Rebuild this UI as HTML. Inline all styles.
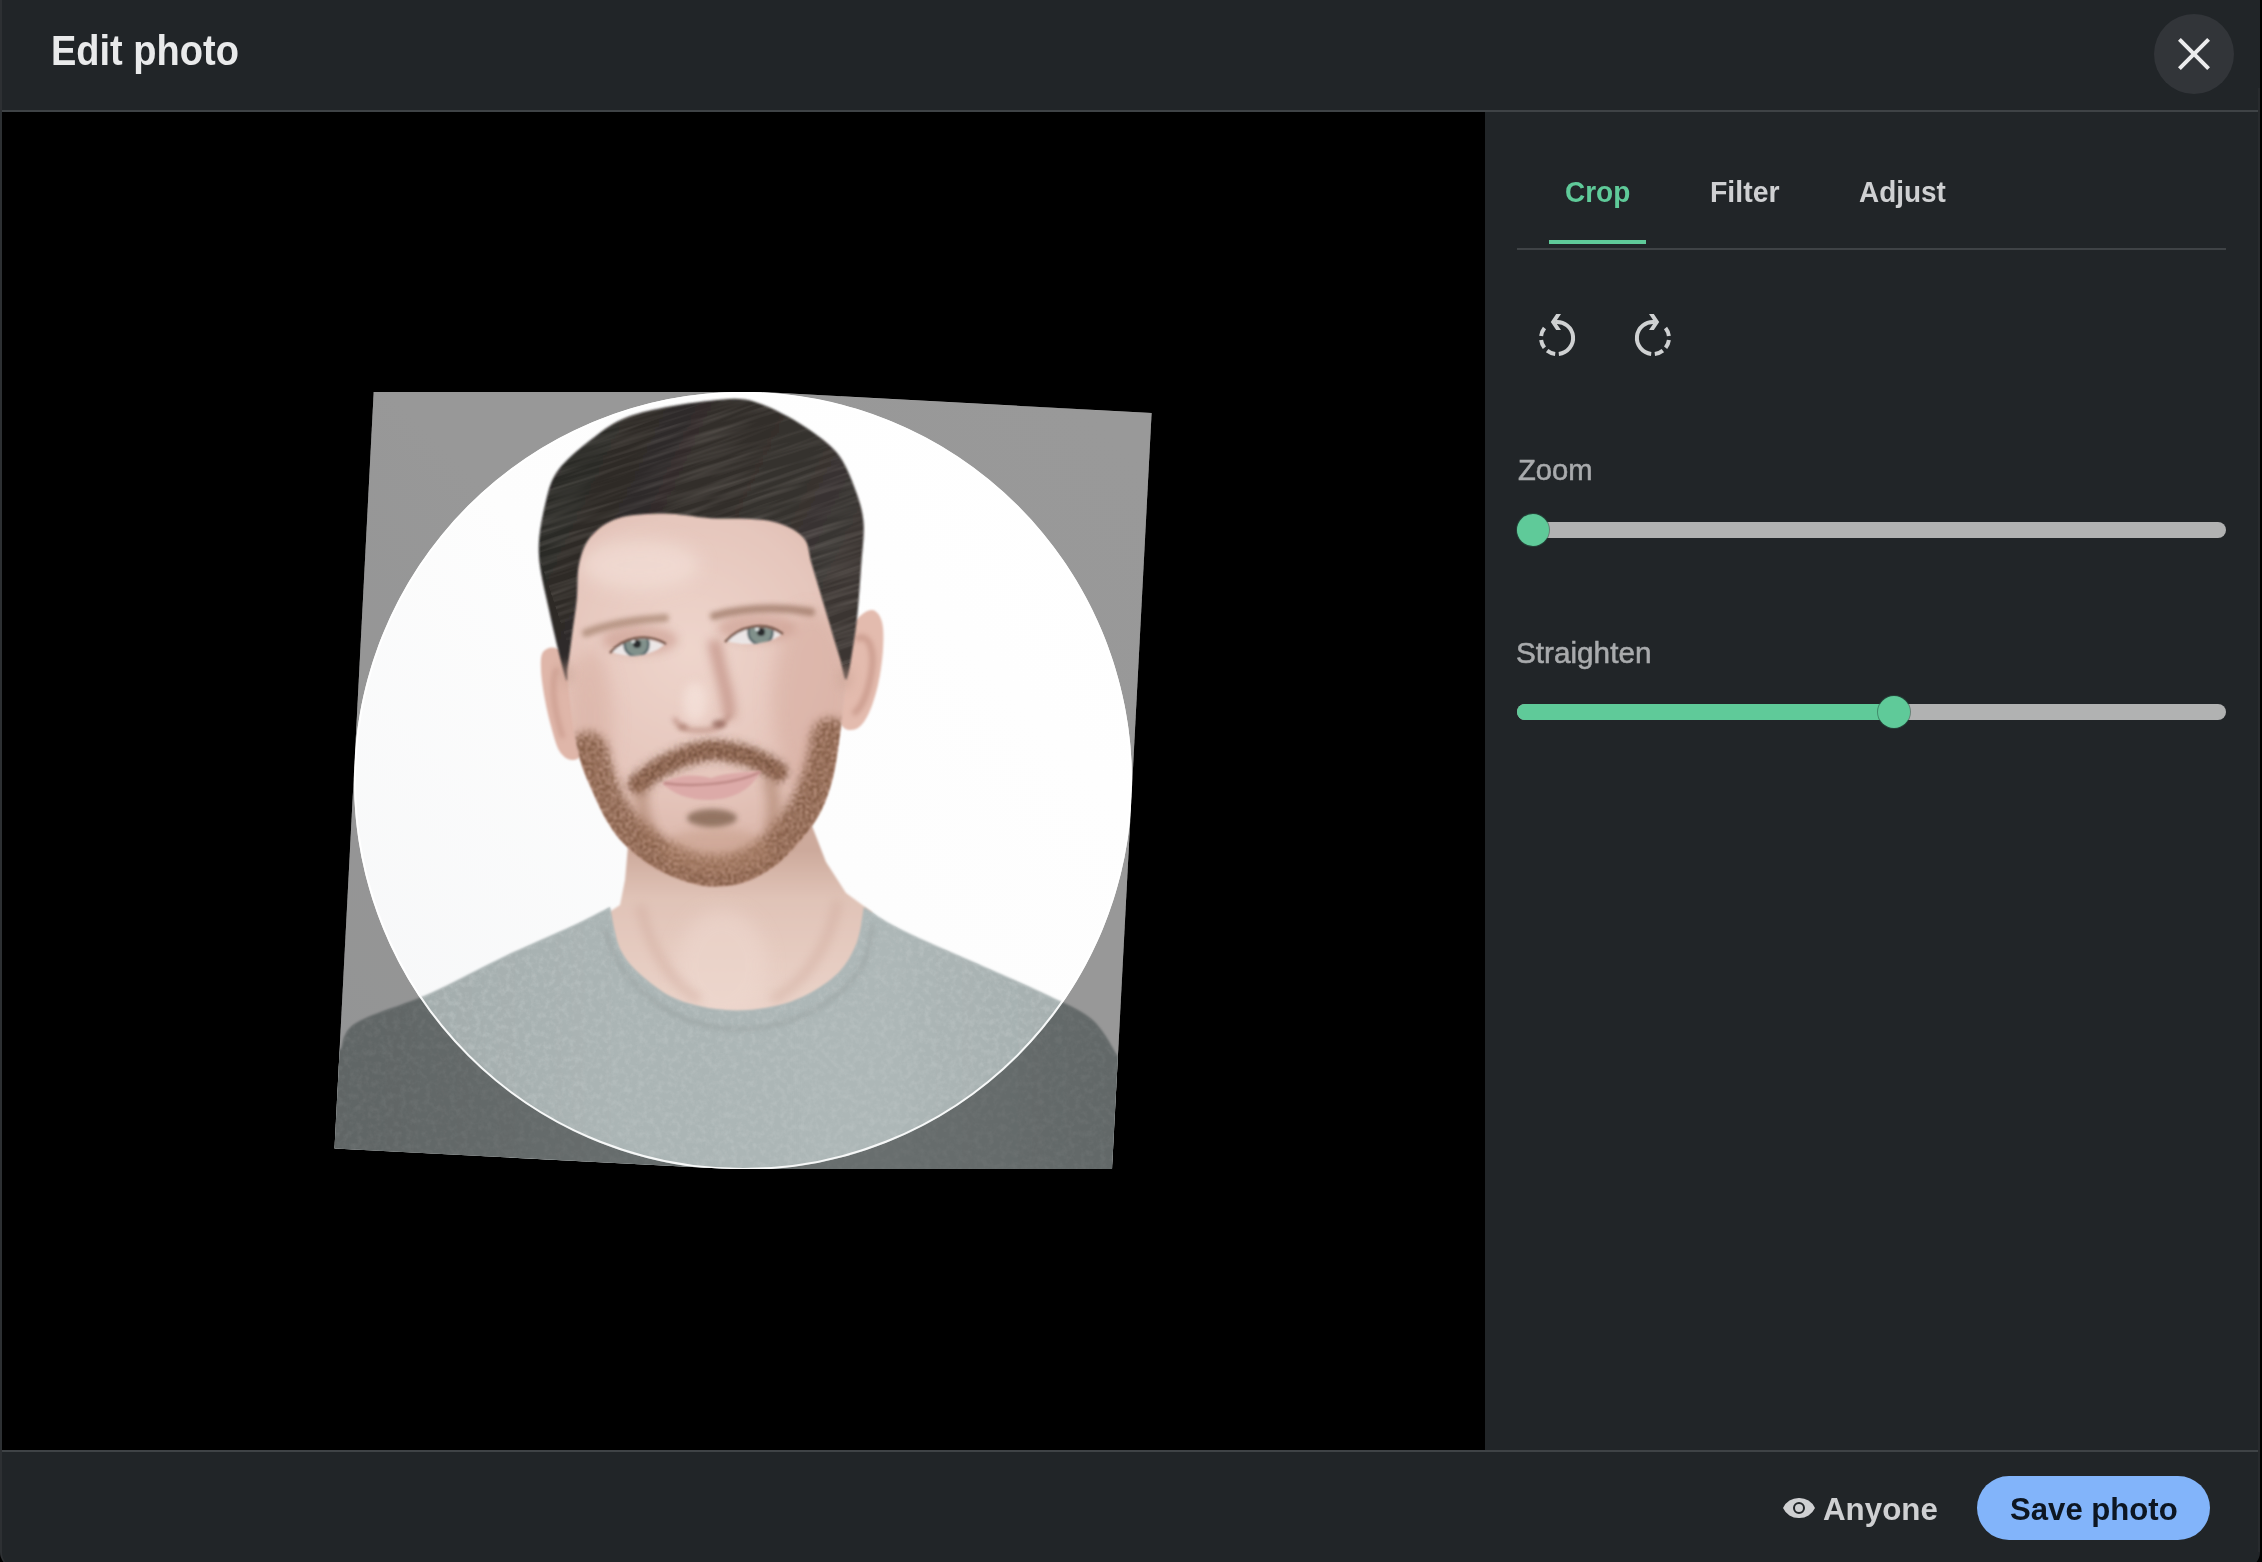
<!DOCTYPE html>
<html>
<head>
<meta charset="utf-8">
<title>Edit photo</title>
<style>
html,body{margin:0;padding:0;width:2262px;height:1562px;overflow:hidden;background:#000;}
#root{position:relative;width:2262px;height:1562px;overflow:hidden;background:#000;font-family:"Liberation Sans",sans-serif;}
.abs{position:absolute;}
.bg{background:#212528;}
.t{position:absolute;white-space:nowrap;line-height:1;transform-origin:0 0;}
#dlg{left:0;top:0;width:2260px;height:1568px;border-radius:0 0 16px 16px;box-sizing:border-box;border-left:2px solid #2d3033;}
#hline{left:2px;top:110px;width:2256px;height:2px;background:#3f4346;}
#canvas{left:2px;top:112px;width:1483px;height:1338px;background:#000;}
#fline{left:2px;top:1450px;width:2256px;height:2px;background:#3f4346;}
#edgeR{left:2258px;top:88px;width:2px;height:1464px;background:#282b2e;}
#close{left:2154px;top:14px;width:80px;height:80px;border-radius:50%;background:#323539;}
#tabline{left:1517px;top:248px;width:709px;height:2px;background:#3f4346;}
#tabul{left:1549px;top:240px;width:97px;height:4px;background:#5fca99;}
.track{height:16px;border-radius:8px;background:#b1b2b2;}
.fill{height:16px;border-radius:8px;background:#5fca99;}
.thumb{width:32px;height:32px;border-radius:50%;background:#5fca99;box-shadow:0 0 0 1px rgba(40,90,70,.55);}
#save{left:1977px;top:1476px;width:233px;height:64px;border-radius:32px;background:#82b4fa;}
</style>
</head>
<body>
<div id="root">
<div class="abs bg" id="dlg"></div>
<div class="abs" id="canvas"></div>
<div class="abs" id="edgeR"></div>
<div class="abs" id="hline"></div>
<div class="abs" id="fline"></div>

<!-- header -->
<div class="t" id="title" style="left:50.5px;top:30px;font-size:42.4px;font-weight:700;color:#e9eaeb;transform:scaleX(.8965)">Edit photo</div>
<div class="abs" id="close"></div>
<svg class="abs" style="left:2170px;top:30px" width="48" height="48" viewBox="0 0 24 24"><path fill="#ececed" d="M13.42 12L20 18.58 18.58 20 12 13.42 5.42 20 4 18.58 10.58 12 4 5.42 5.42 4 12 10.58 18.58 4 20 5.42z"/></svg>

<!-- tabs -->
<div class="t" id="tab1" style="left:1564.5px;top:176px;font-size:30.4px;font-weight:700;color:#5fca99;transform:scaleX(0.9206)">Crop</div>
<div class="t" id="tab2" style="left:1709.5px;top:176px;font-size:30.4px;font-weight:700;color:#cfd0d2;transform:scaleX(0.9359)">Filter</div>
<div class="t" id="tab3" style="left:1859px;top:176px;font-size:30.4px;font-weight:700;color:#cfd0d2;transform:scaleX(0.9175)">Adjust</div>
<div class="abs" id="tabul"></div>
<div class="abs" id="tabline"></div>

<!-- rotate icons -->
<svg class="abs" id="rotL" style="left:1533px;top:314px" width="48" height="48" viewBox="0 0 24 24" fill="none" stroke="#cfd1d2" stroke-width="2">
  <path d="M11.2 4.04A8 8 0 1 1 12.9 19.95"/>
  <path d="M11.1 19.95A8 8 0 0 1 7.07 18.3M5.7 16.9A8 8 0 0 1 4.06 12.98M4.06 11.02A8 8 0 0 1 5.74 7.02"/>
  <path stroke="none" fill="#cfd1d2" d="M14 0H11.6L8.9 4l2.7 4H14l-2.7-4z"/>
</svg>
<svg class="abs" id="rotR" style="left:1629px;top:314px" width="48" height="48" viewBox="0 0 24 24" fill="none" stroke="#cfd1d2" stroke-width="2">
  <g transform="translate(24 0) scale(-1 1)">
  <path d="M11.2 4.04A8 8 0 1 1 12.9 19.95"/>
  <path d="M11.1 19.95A8 8 0 0 1 7.07 18.3M5.7 16.9A8 8 0 0 1 4.06 12.98M4.06 11.02A8 8 0 0 1 5.74 7.02"/>
  <path stroke="none" fill="#cfd1d2" d="M14 0H11.6L8.9 4l2.7 4H14l-2.7-4z"/>
  </g>
</svg>

<!-- sliders -->
<div class="t" id="lzoom" style="left:1517.5px;top:455px;font-size:29.3px;color:#a9abad;-webkit-text-stroke:.55px #a9abad;transform:scaleX(.995)">Zoom</div>
<div class="abs track" style="left:1517px;top:522px;width:709px;"></div>
<div class="abs thumb" style="left:1517px;top:514px;"></div>

<div class="t" id="lstr" style="left:1516px;top:637.5px;font-size:29.3px;color:#a9abad;-webkit-text-stroke:.55px #a9abad;transform:scaleX(1.014)">Straighten</div>
<div class="abs track" style="left:1517px;top:704px;width:709px;"></div>
<div class="abs fill" style="left:1517px;top:704px;width:385px;"></div>
<div class="abs thumb" style="left:1878px;top:696px;"></div>

<!-- footer -->
<svg class="abs" id="eye" style="left:1783px;top:1492px" width="32" height="32" viewBox="0 0 16 16"><path fill="#cfd0d2" d="M8 3a8.59 8.59 0 00-8 5 8.54 8.54 0 008 5 8.55 8.55 0 008-5 8.55 8.55 0 00-8-5zm0 8a3 3 0 113-3 3 3 0 01-3 3zm2-3a2 2 0 11-2-2 2 2 0 012 2z"/></svg>
<div class="t" id="anyone" style="left:1822.5px;top:1492.8px;font-size:32px;font-weight:700;color:#cfd0d2;transform:scaleX(.979)">Anyone</div>
<div class="abs" id="save"></div>
<div class="t" id="savet" style="left:2009.5px;top:1492.8px;font-size:32px;font-weight:700;color:#0d1622;transform:scaleX(.9726)">Save photo</div>

<!-- PHOTO -->
<svg class="abs" id="photo" style="left:0;top:0" width="2262" height="1562" viewBox="0 0 2262 1562">
<defs>
<clipPath id="pc"><polygon points="373.7,392 761,392 1151.6,413 1112,1169 731,1169 334.5,1148.5"/></clipPath>
<clipPath id="ceL"><path d="M612,652 C622,640 645,634 664,645 C652,656 628,659 612,652Z"/></clipPath>
<clipPath id="ceR"><path d="M727,641 C740,627 764,622 781,635 C768,644 744,647 727,641Z"/></clipPath>
<clipPath id="cface"><path d="M566.0,640.0C565.7,663.3 567.8,680.8 570.0,700.0C572.2,719.2 575.2,739.7 579.0,755.0C582.8,770.3 588.0,780.5 593.0,792.0C598.0,803.5 603.2,814.8 609.0,824.0C614.8,833.2 619.8,839.7 627.5,847.0C635.2,854.3 645.0,862.2 655.0,868.0C665.0,873.8 677.4,878.9 687.4,882.0C697.4,885.1 705.4,886.5 715.0,886.5C724.6,886.5 735.0,885.5 745.0,882.0C755.0,878.5 765.4,873.1 775.0,865.8C784.6,858.5 794.9,847.2 802.6,838.0C810.3,828.8 816.0,820.5 821.0,810.5C826.0,800.5 829.4,790.3 832.5,778.0C835.6,765.7 837.3,751.5 839.4,736.8C841.5,722.1 843.6,706.1 845.0,690.0C846.4,673.9 848.0,661.7 848.0,640.0C848.0,618.3 853.0,581.7 845.0,560.0C837.0,538.3 824.2,520.8 800.0,510.0C775.8,499.2 733.3,495.0 700.0,495.0C666.7,495.0 621.3,499.2 600.0,510.0C578.7,520.8 577.7,538.3 572.0,560.0C566.3,581.7 566.3,616.7 566.0,640.0Z"/></clipPath>
<clipPath id="chair"><path d="M565.3,677.0C562.2,667.3 553.4,630.7 549.0,610.0C544.6,589.3 539.3,570.8 538.8,552.8C538.2,534.8 542.5,515.8 545.7,502.0C549.0,488.2 550.8,480.3 558.3,470.0C565.8,459.7 579.8,448.5 590.6,440.0C601.4,431.5 610.6,424.4 622.9,419.0C635.2,413.6 649.7,410.7 664.3,407.6C678.9,404.6 696.9,402.0 710.4,400.7C723.9,399.4 733.5,397.7 745.0,399.6C756.5,401.5 768.0,406.7 779.5,412.3C791.0,417.9 804.0,425.7 814.0,433.0C824.0,440.3 832.5,446.4 839.4,456.0C846.3,465.6 851.6,479.4 855.6,490.6C859.6,501.8 862.7,510.8 863.6,523.0C864.5,535.2 862.3,549.5 861.3,564.0C860.3,578.5 859.1,596.5 857.8,610.0C856.5,623.5 855.2,633.4 853.3,645.0C851.4,656.6 848.7,677.6 846.4,679.5C844.1,681.4 842.9,668.0 839.4,656.5C835.9,645.0 830.2,625.8 825.6,610.4C821.0,595.0 815.6,576.6 811.8,564.3C808.0,552.0 809.9,544.0 802.6,536.7C795.3,529.4 783.4,523.7 768.0,520.6C752.6,517.5 727.7,519.4 710.4,518.2C693.1,517.0 679.7,513.6 664.3,513.6C648.9,513.6 630.5,514.4 618.2,518.2C605.9,522.1 597.1,529.0 590.6,536.7C584.1,544.4 581.3,553.9 579.0,564.3C576.7,574.7 577.9,587.4 576.8,598.9C575.7,610.4 573.7,622.0 572.2,633.5C570.7,645.0 568.8,660.8 567.6,668.0C566.5,675.2 568.4,686.7 565.3,677.0Z"/></clipPath>
<clipPath id="cshirt"><path d="M300,1200 L300,1075 L341,1049 C343.5,1044.7 341.4,1032.2 356.0,1023.0C370.6,1013.8 404.6,1004.9 428.8,994.0C453.0,983.1 477.1,969.4 501.3,957.9C525.5,946.4 555.7,933.8 573.8,925.3C591.9,916.8 604.0,910.0 610.0,907.0C611.8,914.3 614.9,938.5 620.9,950.6C626.9,962.7 636.0,971.1 646.3,979.6C656.6,988.1 667.4,996.3 682.5,1001.4C697.6,1006.5 718.8,1010.4 736.9,1010.4C755.0,1010.4 775.0,1007.1 791.3,1001.4C807.6,995.7 823.9,985.7 834.8,976.0C845.7,966.3 851.7,954.9 856.5,943.4C861.3,931.9 862.6,913.1 863.8,907.0C869.8,910.6 881.9,919.8 900.0,928.9C918.1,938.0 948.3,950.6 972.5,961.5C996.7,972.4 1025.1,984.3 1045.0,994.0C1064.9,1003.7 1079.9,1009.2 1092.0,1019.5C1104.1,1029.8 1113.2,1049.8 1117.5,1055.8L1180,1120 L1180,1200 Z"/></clipPath>
<linearGradient id="bgG" gradientUnits="userSpaceOnUse" x1="1100" y1="420" x2="380" y2="1100">
<stop offset="0" stop-color="#ffffff"/><stop offset=".5" stop-color="#fdfdfd"/><stop offset="1" stop-color="#f6f7f8"/></linearGradient>
<radialGradient id="faceG" gradientUnits="userSpaceOnUse" cx="690" cy="650" r="250">
<stop offset="0" stop-color="#eed5cc"/><stop offset=".55" stop-color="#e5c6bc"/><stop offset="1" stop-color="#d6aea1"/></radialGradient>
<linearGradient id="neckG" gradientUnits="userSpaceOnUse" x1="0" y1="850" x2="0" y2="1010">
<stop offset="0" stop-color="#cdaa9c"/><stop offset=".3" stop-color="#e0c3b7"/><stop offset="1" stop-color="#ead3c9"/></linearGradient>
<linearGradient id="shirtG" gradientUnits="userSpaceOnUse" x1="340" y1="0" x2="1120" y2="0">
<stop offset="0" stop-color="#a0a9a9"/><stop offset=".35" stop-color="#abb5b5"/><stop offset=".7" stop-color="#adb7b7"/><stop offset="1" stop-color="#a3adad"/></linearGradient>
<linearGradient id="hairG" gradientUnits="userSpaceOnUse" x1="560" y1="420" x2="860" y2="560">
<stop offset="0" stop-color="#2a2826"/><stop offset=".5" stop-color="#322e2b"/><stop offset="1" stop-color="#3b3633"/></linearGradient>
<filter id="b1" filterUnits="userSpaceOnUse" x="300" y="370" width="900" height="840"><feGaussianBlur stdDeviation="1.2"/></filter>
<filter id="b2" filterUnits="userSpaceOnUse" x="300" y="370" width="900" height="840"><feGaussianBlur stdDeviation="2.5"/></filter>
<filter id="b4" filterUnits="userSpaceOnUse" x="300" y="370" width="900" height="840"><feGaussianBlur stdDeviation="5"/></filter>
<filter id="b8" filterUnits="userSpaceOnUse" x="300" y="370" width="900" height="840"><feGaussianBlur stdDeviation="9"/></filter>
<filter id="stub" filterUnits="userSpaceOnUse" x="560" y="700" width="320" height="220">
<feTurbulence type="fractalNoise" baseFrequency=".35" numOctaves="2" seed="7" result="n"/>
<feColorMatrix in="n" type="matrix" values="0 0 0 0 0  0 0 0 0 0  0 0 0 0 0  0 0 0 2.2 -.55" result="a"/>
<feGaussianBlur in="SourceGraphic" stdDeviation="4" result="g"/>
<feComposite in="g" in2="a" operator="in"/>
</filter>
<filter id="knit" filterUnits="userSpaceOnUse" x="300" y="880" width="900" height="320">
<feTurbulence type="fractalNoise" baseFrequency=".16" numOctaves="3" seed="3" result="n"/>
<feColorMatrix in="n" type="matrix" values="0 0 0 0 .50  0 0 0 0 .55  0 0 0 0 .55  0 0 0 2.4 -.95"/>
</filter>
<filter id="strand" filterUnits="userSpaceOnUse" x="520" y="380" width="360" height="320">
<feTurbulence type="fractalNoise" baseFrequency=".012 .22" numOctaves="2" seed="5" result="n"/>
<feColorMatrix in="n" type="matrix" values="0 0 0 0 .42  0 0 0 0 .38  0 0 0 0 .35  0 0 0 1.6 -.62"/>
</filter>
</defs>
<g clip-path="url(#pc)">
<rect x="320" y="380" width="850" height="800" fill="url(#bgG)"/>
<!-- neck -->
<path d="M629,835 L625,880 L620,905 L600,918 L615,1020 L870,1020 L872,912 L846,893 L826,862 L812,826 Z" fill="url(#neckG)" filter="url(#b1)"/>
<ellipse cx="722" cy="965" rx="45" ry="55" fill="#efd9d0" opacity=".55" filter="url(#b8)"/>
<path d="M640,905 C650,950 672,985 700,1000 M838,900 C830,945 806,982 772,1000" fill="none" stroke="#cfa99b" stroke-width="10" opacity=".45" filter="url(#b4)"/>
<!-- shirt -->
<path d="M300,1200 L300,1075 L341,1049 C343.5,1044.7 341.4,1032.2 356.0,1023.0C370.6,1013.8 404.6,1004.9 428.8,994.0C453.0,983.1 477.1,969.4 501.3,957.9C525.5,946.4 555.7,933.8 573.8,925.3C591.9,916.8 604.0,910.0 610.0,907.0C611.8,914.3 614.9,938.5 620.9,950.6C626.9,962.7 636.0,971.1 646.3,979.6C656.6,988.1 667.4,996.3 682.5,1001.4C697.6,1006.5 718.8,1010.4 736.9,1010.4C755.0,1010.4 775.0,1007.1 791.3,1001.4C807.6,995.7 823.9,985.7 834.8,976.0C845.7,966.3 851.7,954.9 856.5,943.4C861.3,931.9 862.6,913.1 863.8,907.0C869.8,910.6 881.9,919.8 900.0,928.9C918.1,938.0 948.3,950.6 972.5,961.5C996.7,972.4 1025.1,984.3 1045.0,994.0C1064.9,1003.7 1079.9,1009.2 1092.0,1019.5C1104.1,1029.8 1113.2,1049.8 1117.5,1055.8L1180,1120 L1180,1200 Z" fill="url(#shirtG)" filter="url(#b1)"/>
<g clip-path="url(#cshirt)"><rect x="300" y="880" width="900" height="320" filter="url(#knit)" opacity=".55"/>
<path d="M604.0,930.0C607.0,936.3 614.3,956.7 622.0,968.0C629.7,979.3 639.0,989.3 650.0,998.0C661.0,1006.7 673.5,1014.8 688.0,1020.0C702.5,1025.2 719.7,1029.0 737.0,1029.0C754.3,1029.0 775.2,1025.8 792.0,1020.0C808.8,1014.2 826.0,1003.7 838.0,994.0C850.0,984.3 858.2,973.5 864.0,962.0C869.8,950.5 871.5,931.2 873.0,925.0" fill="none" stroke="#8f9695" stroke-width="3" opacity=".55" filter="url(#b2)"/>
</g>
<!-- ears -->
<path d="M570.0,662.0C567.3,655.0 560.5,649.7 556.0,648.0C551.5,646.3 545.5,648.3 543.0,652.0C540.5,655.7 540.7,662.0 541.0,670.0C541.3,678.0 543.2,690.0 545.0,700.0C546.8,710.0 549.5,721.3 552.0,730.0C554.5,738.7 556.7,747.0 560.0,752.0C563.3,757.0 568.3,760.0 572.0,760.0C575.7,760.0 581.3,758.7 582.0,752.0C582.7,745.3 577.7,730.3 576.0,720.0C574.3,709.7 573.0,699.7 572.0,690.0C571.0,680.3 572.7,669.0 570.0,662.0Z" fill="#dfb6a9" filter="url(#b1)"/>
<path d="M838.0,648.0C841.3,638.8 850.3,626.3 856.0,620.0C861.7,613.7 867.7,609.7 872.0,610.0C876.3,610.3 880.2,615.3 882.0,622.0C883.8,628.7 883.7,639.5 883.0,650.0C882.3,660.5 880.5,674.2 878.0,685.0C875.5,695.8 871.7,707.7 868.0,715.0C864.3,722.3 860.3,727.2 856.0,729.0C851.7,730.8 845.7,730.8 842.0,726.0C838.3,721.2 835.0,708.5 834.0,700.0C833.0,691.5 835.3,683.7 836.0,675.0C836.7,666.3 834.7,657.2 838.0,648.0Z" fill="#e3bbae" filter="url(#b1)"/>
<path d="M856,640 C868,630 876,650 871,675 C867,697 860,710 853,714" fill="none" stroke="#bd8a7c" stroke-width="6" opacity=".6" filter="url(#b2)"/>
<path d="M557,668 C550,682 554,712 563,738" fill="none" stroke="#bd8a7c" stroke-width="5" opacity=".5" filter="url(#b2)"/>
<!-- face -->
<path d="M566.0,640.0C565.7,663.3 567.8,680.8 570.0,700.0C572.2,719.2 575.2,739.7 579.0,755.0C582.8,770.3 588.0,780.5 593.0,792.0C598.0,803.5 603.2,814.8 609.0,824.0C614.8,833.2 619.8,839.7 627.5,847.0C635.2,854.3 645.0,862.2 655.0,868.0C665.0,873.8 677.4,878.9 687.4,882.0C697.4,885.1 705.4,886.5 715.0,886.5C724.6,886.5 735.0,885.5 745.0,882.0C755.0,878.5 765.4,873.1 775.0,865.8C784.6,858.5 794.9,847.2 802.6,838.0C810.3,828.8 816.0,820.5 821.0,810.5C826.0,800.5 829.4,790.3 832.5,778.0C835.6,765.7 837.3,751.5 839.4,736.8C841.5,722.1 843.6,706.1 845.0,690.0C846.4,673.9 848.0,661.7 848.0,640.0C848.0,618.3 853.0,581.7 845.0,560.0C837.0,538.3 824.2,520.8 800.0,510.0C775.8,499.2 733.3,495.0 700.0,495.0C666.7,495.0 621.3,499.2 600.0,510.0C578.7,520.8 577.7,538.3 572.0,560.0C566.3,581.7 566.3,616.7 566.0,640.0Z" fill="url(#faceG)" filter="url(#b1)"/>
<g filter="url(#b1)"><g clip-path="url(#cface)">
<ellipse cx="812" cy="700" rx="40" ry="90" fill="#d5aa9d" opacity=".55" filter="url(#b8)"/>
<ellipse cx="590" cy="720" rx="22" ry="70" fill="#d5aa9d" opacity=".5" filter="url(#b8)"/>
<ellipse cx="640" cy="565" rx="60" ry="26" fill="#f4e2da" opacity=".6" filter="url(#b8)"/>
<!-- eye sockets -->
<ellipse cx="640" cy="640" rx="38" ry="14" fill="#c99a8d" opacity=".6" filter="url(#b4)"/>
<ellipse cx="757" cy="628" rx="40" ry="14" fill="#c99a8d" opacity=".6" filter="url(#b4)"/>
<!-- beard -->
<path d="M588.0,752.0C590.0,758.7 595.2,780.3 600.0,792.0C604.8,803.7 611.0,813.7 617.0,822.0C623.0,830.3 628.5,835.7 636.0,842.0C643.5,848.3 653.0,855.0 662.0,860.0C671.0,865.0 681.0,869.5 690.0,872.0C699.0,874.5 707.2,875.2 716.0,875.0C724.8,874.8 734.0,874.2 743.0,871.0C752.0,867.8 761.3,862.8 770.0,856.0C778.7,849.2 788.0,839.0 795.0,830.0C802.0,821.0 807.2,811.7 812.0,802.0C816.8,792.3 820.8,782.7 824.0,772.0C827.2,761.3 829.8,743.7 831.0,738.0" fill="none" stroke="#9c7158" stroke-width="36" stroke-linecap="round" opacity=".55" filter="url(#b4)"/>
<path d="M588.0,752.0C590.0,758.7 595.2,780.3 600.0,792.0C604.8,803.7 611.0,813.7 617.0,822.0C623.0,830.3 628.5,835.7 636.0,842.0C643.5,848.3 653.0,855.0 662.0,860.0C671.0,865.0 681.0,869.5 690.0,872.0C699.0,874.5 707.2,875.2 716.0,875.0C724.8,874.8 734.0,874.2 743.0,871.0C752.0,867.8 761.3,862.8 770.0,856.0C778.7,849.2 788.0,839.0 795.0,830.0C802.0,821.0 807.2,811.7 812.0,802.0C816.8,792.3 820.8,782.7 824.0,772.0C827.2,761.3 829.8,743.7 831.0,738.0" fill="none" stroke="#7d563f" stroke-width="40" stroke-linecap="round" filter="url(#stub)"/>
<ellipse cx="716" cy="850" rx="55" ry="22" fill="#b98e74" opacity=".35" filter="url(#b4)"/>
<path d="M638,784 C660,764 690,752 712,750 C738,751 760,759 778,772" fill="none" stroke="#94684f" stroke-width="17" stroke-linecap="round" opacity=".7" filter="url(#b2)"/>
<path d="M638,784 C660,764 690,752 712,750 C738,751 760,759 778,772" fill="none" stroke="#6f4c39" stroke-width="21" stroke-linecap="round" filter="url(#stub)"/>
<path d="M642,786 C640,805 645,825 655,842 M768,778 C775,795 776,812 770,832" fill="none" stroke="#9c7158" stroke-width="14" opacity=".45" filter="url(#b4)"/>
<ellipse cx="712" cy="818" rx="25" ry="9" fill="#7a5d49" opacity=".75" filter="url(#b2)"/>
</g></g>
<!-- lips -->
<path d="M662,783 C685,772 700,776 711,778 C728,772 748,772 761,771 C750,792 730,800 708,800 C690,800 672,794 662,783Z" fill="#dcaaa8" filter="url(#b1)"/>
<path d="M664,783 C690,787 735,785 760,772" fill="none" stroke="#b8827f" stroke-width="2.5" opacity=".8" filter="url(#b1)"/>
<!-- nose -->
<path d="M714,640 C720,675 731,700 729,718" fill="none" stroke="#c08e82" stroke-width="13" opacity=".7" filter="url(#b4)"/>
<path d="M674,718 C680,730 692,731 700,730 C710,731 722,728 730,714" fill="none" stroke="#b98b7f" stroke-width="5" opacity=".7" filter="url(#b2)"/>
<ellipse cx="719" cy="724" rx="7" ry="4" fill="#8d5f55" opacity=".75" filter="url(#b2)"/>
<ellipse cx="683" cy="727" rx="5" ry="3" fill="#a5776b" opacity=".7" filter="url(#b2)"/>
<ellipse cx="695" cy="702" rx="12" ry="20" fill="#f5e3dc" opacity=".7" filter="url(#b4)"/>
<!-- eyes -->
<g filter="url(#b1)">
<path d="M612,652 C622,640 645,634 664,645 C652,656 628,659 612,652Z" fill="#ebe6e6"/>
<g clip-path="url(#ceL)"><circle cx="636.5" cy="644.5" r="12" fill="#81918b"/><circle cx="636.5" cy="644.5" r="12" fill="none" stroke="#56676b" stroke-width="2.5"/><circle cx="637" cy="644" r="4" fill="#2a2c2d"/><circle cx="633" cy="641" r="2" fill="#e8eeee"/></g>
<path d="M610,653 C622,638 646,632 666,644" fill="none" stroke="#7a5a4e" stroke-width="2.6"/>
<path d="M727,641 C740,627 764,622 781,635 C768,644 744,647 727,641Z" fill="#ebe6e6"/>
<g clip-path="url(#ceR)"><circle cx="760.5" cy="632.5" r="12" fill="#81918b"/><circle cx="760.5" cy="632.5" r="12" fill="none" stroke="#56676b" stroke-width="2.5"/><circle cx="761" cy="632" r="4" fill="#2a2c2d"/><circle cx="757" cy="629" r="2" fill="#e8eeee"/></g>
<path d="M725,642 C739,626 765,620 783,634" fill="none" stroke="#7a5a4e" stroke-width="2.6"/>
</g>
<path d="M586,633 C606,625 632,620 665,618" fill="none" stroke="#a98673" stroke-width="8" stroke-linecap="round" opacity=".75" filter="url(#b2)"/>
<path d="M714,616 C740,609 775,606 811,612" fill="none" stroke="#a07c6a" stroke-width="8" stroke-linecap="round" opacity=".8" filter="url(#b2)"/>
<!-- hair -->
<path d="M565.3,677.0C562.2,667.3 553.4,630.7 549.0,610.0C544.6,589.3 539.3,570.8 538.8,552.8C538.2,534.8 542.5,515.8 545.7,502.0C549.0,488.2 550.8,480.3 558.3,470.0C565.8,459.7 579.8,448.5 590.6,440.0C601.4,431.5 610.6,424.4 622.9,419.0C635.2,413.6 649.7,410.7 664.3,407.6C678.9,404.6 696.9,402.0 710.4,400.7C723.9,399.4 733.5,397.7 745.0,399.6C756.5,401.5 768.0,406.7 779.5,412.3C791.0,417.9 804.0,425.7 814.0,433.0C824.0,440.3 832.5,446.4 839.4,456.0C846.3,465.6 851.6,479.4 855.6,490.6C859.6,501.8 862.7,510.8 863.6,523.0C864.5,535.2 862.3,549.5 861.3,564.0C860.3,578.5 859.1,596.5 857.8,610.0C856.5,623.5 855.2,633.4 853.3,645.0C851.4,656.6 848.7,677.6 846.4,679.5C844.1,681.4 842.9,668.0 839.4,656.5C835.9,645.0 830.2,625.8 825.6,610.4C821.0,595.0 815.6,576.6 811.8,564.3C808.0,552.0 809.9,544.0 802.6,536.7C795.3,529.4 783.4,523.7 768.0,520.6C752.6,517.5 727.7,519.4 710.4,518.2C693.1,517.0 679.7,513.6 664.3,513.6C648.9,513.6 630.5,514.4 618.2,518.2C605.9,522.1 597.1,529.0 590.6,536.7C584.1,544.4 581.3,553.9 579.0,564.3C576.7,574.7 577.9,587.4 576.8,598.9C575.7,610.4 573.7,622.0 572.2,633.5C570.7,645.0 568.8,660.8 567.6,668.0C566.5,675.2 568.4,686.7 565.3,677.0Z" fill="url(#hairG)" filter="url(#b1)"/>
<g clip-path="url(#chair)"><g transform="rotate(-18 700 470)"><rect x="500" y="360" width="420" height="360" filter="url(#strand)" opacity=".3"/></g></g>
<ellipse cx="567" cy="674" rx="8" ry="12" fill="#c9a394" opacity=".45" filter="url(#b4)"/>
<ellipse cx="845" cy="678" rx="8" ry="12" fill="#c9a394" opacity=".45" filter="url(#b4)"/>
<!-- overlay -->
<path fill-rule="evenodd" fill="#000" fill-opacity=".4" d="M300,380H1200V1200H300Z M354,781a389,389 0 1,0 778,0a389,389 0 1,0 -778,0Z"/>
<circle cx="743" cy="781" r="388" fill="none" stroke="#fff" stroke-width="2" opacity=".9"/>
</g>
</svg>
<!-- /PHOTO -->
</div>
</body>
</html>
